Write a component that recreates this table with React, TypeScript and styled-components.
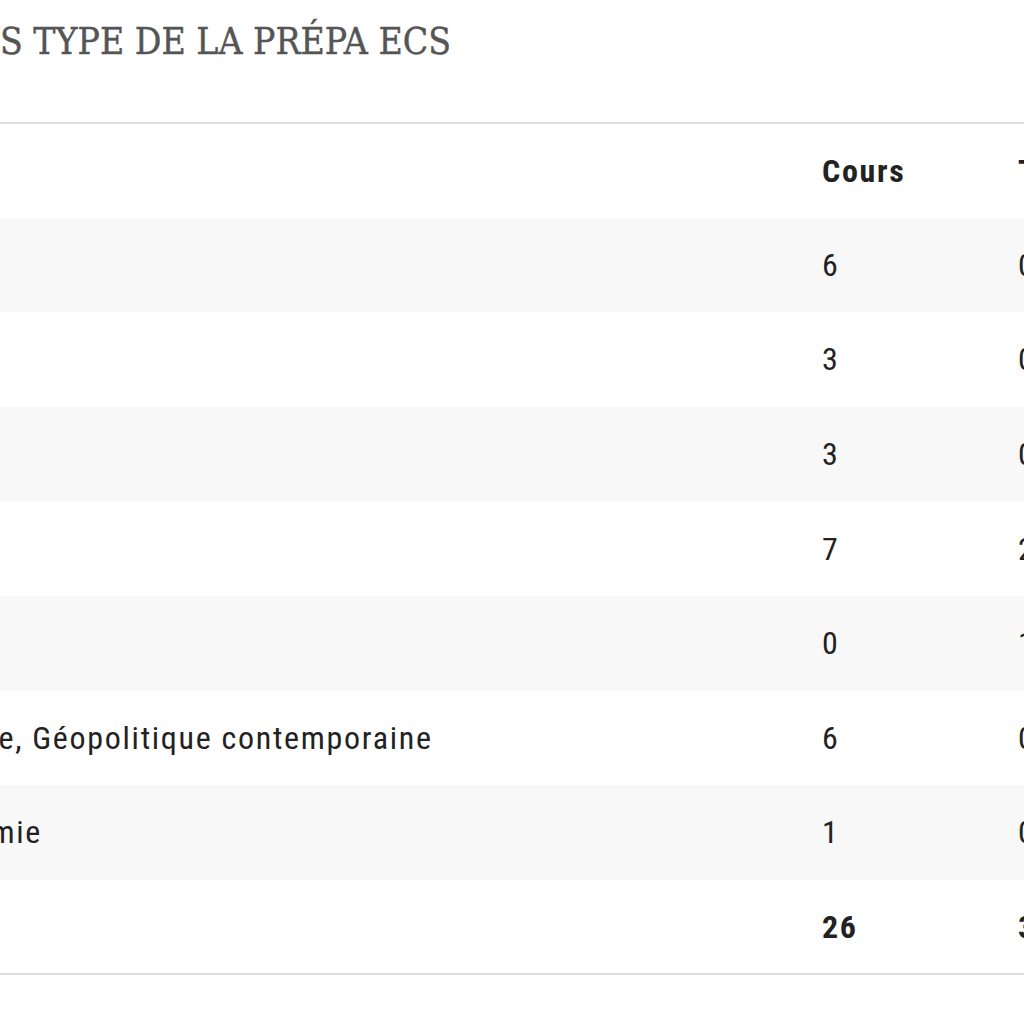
import React from "react";
import styled, { createGlobalStyle } from "styled-components";

const GlobalStyle = createGlobalStyle`
  html, body { margin: 0; padding: 0; background: #ffffff; overflow: hidden; }
  body { width: 1024px; height: 1024px; }
`;

const Page = styled.div`
  width: 1024px;
  height: 1024px;
  overflow: hidden;
  display: flex;
  flex-direction: column;
`;

const TitleClip = styled.div`
  width: 451px;
  height: 122px;
  overflow: hidden;
  display: flex;
  justify-content: flex-end;
  align-items: flex-start;
`;

const Title = styled.h2`
  margin: 0;
  padding-top: 20px;
  flex: none;
  white-space: nowrap;
  font-family: "Roboto Slab", "DejaVu Serif", serif;
  font-weight: 400;
  font-stretch: 87%;
  font-size: 37px;
  line-height: 44px;
  color: #555555;
  -webkit-text-stroke: 0.4px #555555;
`;

const TableWrap = styled.div`
  margin-left: -291px;
`;

const Table = styled.table`
  border-collapse: collapse;
  table-layout: fixed;
  width: 1560px;
  border-top: 2px solid #dddddd;
  border-bottom: 2px solid #dddddd;
  font-family: "Roboto Condensed", Roboto, "Liberation Sans", sans-serif;
  font-stretch: 75%;
  font-size: 32px;
  letter-spacing: 1.7px;
  color: #222222;
`;

const Row = styled.tr<{ $striped?: boolean }>`
  height: 94.6px;
  background: ${(p) => (p.$striped ? "#f8f8f8" : "#ffffff")};
`;

const HeadCell = styled.th`
  text-align: left;
  font-weight: 700;
  padding: 0 16px;
  vertical-align: middle;
  white-space: nowrap;
`;

const Cell = styled.td<{ $bold?: boolean }>`
  padding: 0 16px;
  font-weight: ${(p) => (p.$bold ? 700 : 400)};
  vertical-align: middle;
  white-space: nowrap;
  overflow: hidden;
`;

const rows = [
  { label: "Mathématiques", cours: "6", td: "0" },
  { label: "Anglais", cours: "3", td: "0" },
  { label: "Espagnol", cours: "3", td: "0" },
  { label: "Culture générale", cours: "7", td: "2" },
  { label: "Informatique", cours: "0", td: "1" },
  { label: "Histoire, Géographie, Géopolitique contemporaine", cours: "6", td: "0" },
  { label: "Initiation à l’économie", cours: "1", td: "0" },
];

export default function App() {
  return (
    <Page>
      <GlobalStyle />
      <TitleClip>
        <Title>EMPLOI DU TEMPS TYPE DE LA PRÉPA ECS</Title>
      </TitleClip>
      <TableWrap>
        <Table>
          <colgroup>
            <col style={{ width: 1097 }} />
            <col style={{ width: 196 }} />
            <col style={{ width: 267 }} />
          </colgroup>
          <thead>
            <Row>
              <HeadCell>Matière</HeadCell>
              <HeadCell>Cours</HeadCell>
              <HeadCell>TD</HeadCell>
            </Row>
          </thead>
          <tbody>
            {rows.map((r, i) => (
              <Row key={r.label} $striped={i % 2 === 0}>
                <Cell>{r.label}</Cell>
                <Cell>{r.cours}</Cell>
                <Cell>{r.td}</Cell>
              </Row>
            ))}
            <Row>
              <Cell $bold>Total</Cell>
              <Cell $bold>26</Cell>
              <Cell $bold>3</Cell>
            </Row>
          </tbody>
        </Table>
      </TableWrap>
    </Page>
  );
}
